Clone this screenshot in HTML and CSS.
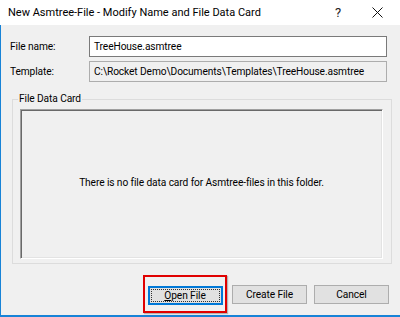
FILE: index.html
```html
<!DOCTYPE html>
<html>
<head>
<meta charset="utf-8">
<link rel="stylesheet" href="styles.css">
</head>
<body>
<div class="window">
  <div class="titlebar">
    <span class="title">New Asmtree-File - Modify Name and File Data Card</span>
    <span class="help">?</span>
    <span class="close">
      <svg width="11" height="11" viewBox="0 0 11 11"><path d="M0.5 0.5 L10.5 10.5 M10.5 0.5 L0.5 10.5" stroke="#111" stroke-width="1" fill="none"/></svg>
    </span>
  </div>
  <div class="content">
    <div class="form">
      <label class="lbl">File name:</label>
      <div class="field edit">TreeHouse.asmtree</div>
      <label class="lbl">Template:</label>
      <div class="field readonly">C:\Rocket Demo\Documents\Templates\TreeHouse.asmtree</div>
    </div>
    <fieldset class="group">
      <legend class="legend">File Data Card</legend>
      <div class="panel">There is no file data card for Asmtree-files in this folder.</div>
    </fieldset>
    <div class="buttons">
      <div class="highlight">
        <button class="btn default"><span class="focus"><u>O</u>pen File</span></button>
      </div>
      <button class="btn">Create File</button>
      <button class="btn">Cancel</button>
    </div>
  </div>
</div>
</body>
</html>
```
FILE: styles.css
```css
html, body {
  margin: 0;
  padding: 0;
  background: #f0f0f0;
}
.window {
  width: 400px;
  height: 317px;
  display: flex;
  flex-direction: column;
  font-family: Roboto, "Noto Sans", sans-serif;
  font-size: 10.2px;
  letter-spacing: -0.1px;
  color: #000;
  background: #f0f0f0;
  overflow: hidden;
}
.titlebar {
  height: 25px;
  flex: none;
  background: #fff;
  display: flex;
  align-items: center;
  padding-left: 8px;
  font-size: 11px;
  letter-spacing: 0;
}
.title {
  flex: 1;
}
.help {
  width: 12px;
  margin-right: 25px;
  font-size: 13px;
  color: #222;
}
.close {
  width: 11px;
  margin-right: 17px;
  display: flex;
}
.content {
  flex: 1;
  border-left: 1px solid #1883d7;
  border-bottom: 2px solid #1883d7;
  display: flex;
  flex-direction: column;
}
.form {
  display: grid;
  grid-template-columns: 79px 298px;
  grid-auto-rows: 21px;
  row-gap: 4px;
  padding: 11px 0 0 9px;
  align-items: center;
}
.lbl {
  color: #000;
}
.field {
  box-sizing: border-box;
  height: 21px;
  display: flex;
  align-items: center;
  padding-left: 4px;
  white-space: nowrap;
  overflow: hidden;
}
.edit {
  background: #fff;
  border: 1px solid #7a7a7a;
}
.readonly {
  background: #f0f0f0;
  border: 1px solid #adadad;
  color: #000;
}
.group {
  box-sizing: border-box;
  margin: 10px 8px 0 11px;
  padding: 3px 8px 7px 7px;
  height: 172px;
  border: 1px solid #dcdcdc;
  min-width: 0;
}
.legend {
  padding: 0 1px;
  margin-left: -2px;
  line-height: 14px;
}
.panel {
  box-sizing: border-box;
  height: 150px;
  border: 1px solid;
  border-color: #a0a0a0 #fff #fff #a0a0a0;
  box-shadow: inset 1px 1px #696969, inset -1px -1px #e3e3e3;
  display: flex;
  align-items: center;
  justify-content: center;
  padding-bottom: 4px;
}
.buttons {
  display: flex;
  justify-content: flex-end;
  align-items: center;
  gap: 7px;
  padding: 11px 11px 0 0;
}
.highlight {
  box-sizing: border-box;
  width: 84px;
  height: 38px;
  border: 2px solid #e00000;
  box-shadow: 1px 1px 1px rgba(0,0,0,0.25);
  display: flex;
  align-items: center;
  justify-content: center;
  margin-right: -2px;
  padding-top: 2px;
}
.btn {
  box-sizing: border-box;
  width: 75px;
  height: 19px;
  background: #e1e1e1;
  border: 1px solid #adadad;
  font-family: inherit;
  font-size: 10.2px;
  letter-spacing: -0.1px;
  color: #000;
  padding: 0;
  display: flex;
  align-items: center;
  justify-content: center;
}
.default {
  border: 2px solid #0078d7;
  padding: 1px;
}
.focus {
  box-sizing: border-box;
  width: 100%;
  height: 100%;
  border: 1px dotted #333;
  display: flex;
  align-items: center;
  justify-content: center;
}
```
